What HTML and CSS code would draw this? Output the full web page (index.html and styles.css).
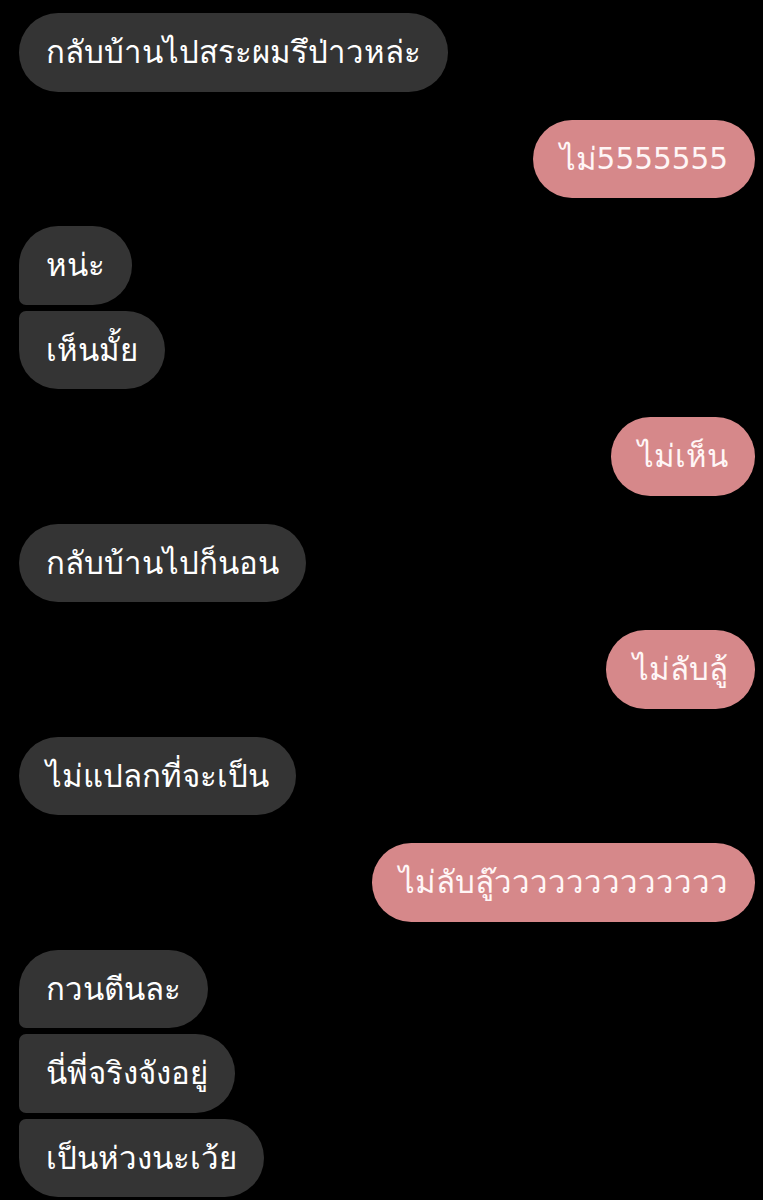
FILE: index.html
```html
<!DOCTYPE html>
<html lang="th">
<head>
<meta charset="utf-8">
<title>Chat</title>
<link rel="stylesheet" href="styles.css">
</head>
<body>
<div class="thread">
  <div class="group in">
    <div class="bubble">กลับบ้านไปสระผมรึป่าวหล่ะ</div>
  </div>
  <div class="group out">
    <div class="bubble">ไม่<span class="num">5555555</span></div>
  </div>
  <div class="group in">
    <div class="bubble">หน่ะ</div>
    <div class="bubble">เห็นมั้ย</div>
  </div>
  <div class="group out">
    <div class="bubble">ไม่เห็น</div>
  </div>
  <div class="group in">
    <div class="bubble">กลับบ้านไปก็นอน</div>
  </div>
  <div class="group out">
    <div class="bubble">ไม่ลับลู้</div>
  </div>
  <div class="group in">
    <div class="bubble">ไม่แปลกที่จะเป็น</div>
  </div>
  <div class="group out">
    <div class="bubble">ไม่ลับลู๊ววววววววววววว</div>
  </div>
  <div class="group in">
    <div class="bubble">กวนตีนละ</div>
    <div class="bubble">นี่พี่จริงจังอยู่</div>
    <div class="bubble">เป็นห่วงนะเว้ย</div>
  </div>
</div>
</body>
</html>
```
FILE: styles.css
```css
html, body {
  margin: 0;
  padding: 0;
  background: #000;
}
body {
  width: 763px;
  height: 1200px;
  overflow: hidden;
  font-family: "Liberation Sans", sans-serif;
}
.thread {
  display: flex;
  flex-direction: column;
  gap: 28px;
  padding: 13px 8px 0 19px;
}
.group {
  display: flex;
  flex-direction: column;
  gap: 6px;
}
.group.in { align-items: flex-start; }
.group.out { align-items: flex-end; }
.bubble {
  height: 78.5px;
  box-sizing: border-box;
  display: flex;
  align-items: center;
  padding: 0 27px;
  border-radius: 39.25px;
  font-size: 31.2px;
  color: #fff;
  white-space: nowrap;
}
.num {
  font-family: "DejaVu Sans", sans-serif;
  font-size: 29.5px;
}
.in .bubble { background: #343434; }
.out .bubble { background: #d6888a; color: #fff6f6; }
.in .bubble:not(:last-child) { border-bottom-left-radius: 7px; }
.in .bubble:not(:first-child) { border-top-left-radius: 7px; }
```
